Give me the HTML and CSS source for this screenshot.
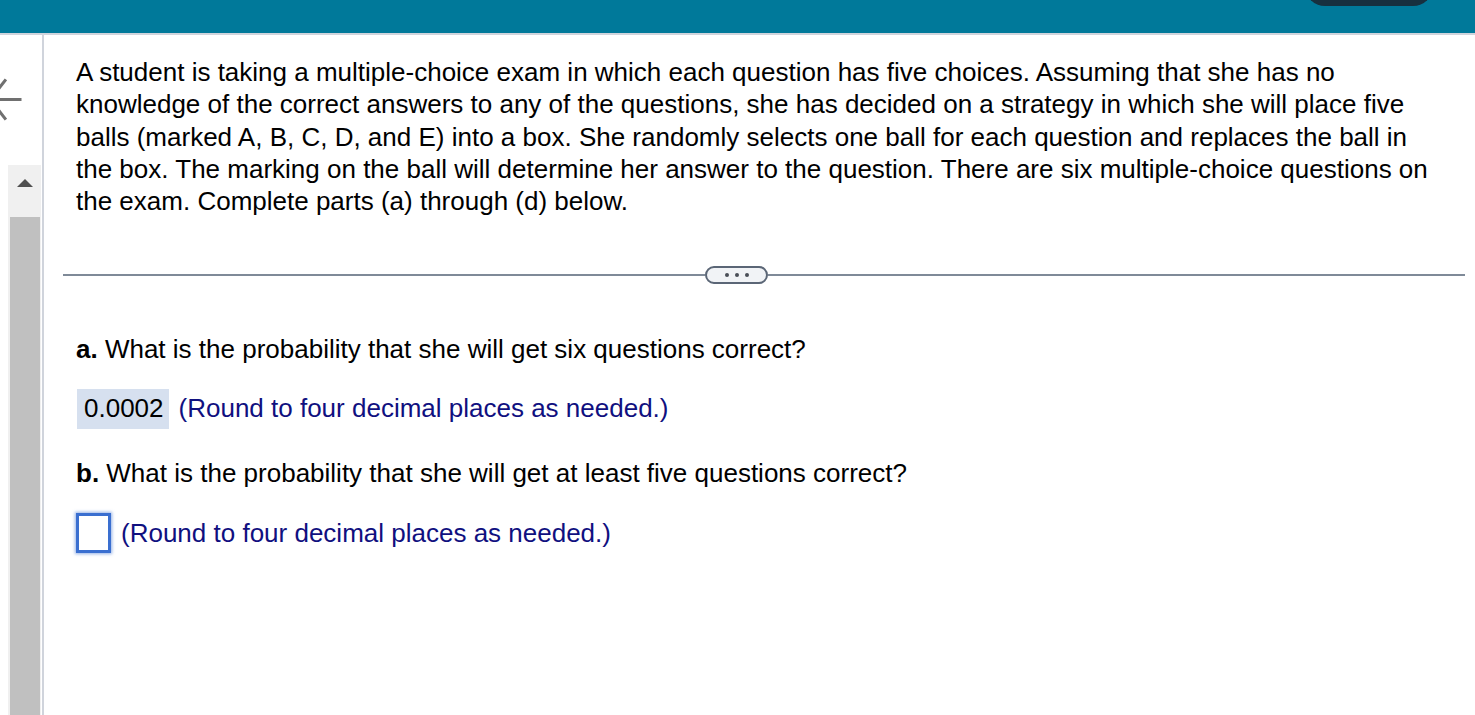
FILE: index.html
```html
<!DOCTYPE html>
<html lang="en">
<head>
<meta charset="utf-8">
<title>Exam question</title>
<link rel="stylesheet" href="styles.css">
</head>
<body>
<header class="topbar">
  <div class="top-pill"></div>
</header>
<div class="layout">
  <aside class="side">
    <svg class="back" width="42" height="60" viewBox="0 0 42 60" aria-hidden="true">
      <path d="M20 29.5 H-8 M5 10.5 L-9.5 29.5 L5 48.5" fill="none" stroke="#707070" stroke-width="3" stroke-linecap="square"/>
    </svg>
    <div class="track">
      <div class="arrow-up"></div>
      <div class="thumb"></div>
    </div>
  </aside>
  <main class="main">
    <p class="stem">A student is taking a multiple-choice exam in which each question has five choices. Assuming that she has no knowledge of the correct answers to any of the questions, she has decided on a strategy in which she will place five balls (marked A, B, C, D, and E) into a box. She randomly selects one ball for each question and replaces the ball in the box. The marking on the ball will determine her answer to the question. There are six multiple-choice questions on the exam. Complete parts (a) through (d) below.</p>
    <div class="sep">
      <div class="sep-line sep-left"></div>
      <div class="sep-pill"><span class="dot"></span><span class="dot"></span><span class="dot"></span></div>
      <div class="sep-line sep-right"></div>
    </div>
    <p class="q q-a"><b>a.</b> What is the probability that she will get six questions correct?</p>
    <div class="ans ans-a">
      <span class="filled">0.0002</span>
      <span class="hint">(Round to four decimal places as needed.)</span>
    </div>
    <p class="q q-b"><b>b.</b> What is the probability that she will get at least five questions correct?</p>
    <div class="ans ans-b">
      <span class="input"></span>
      <span class="hint">(Round to four decimal places as needed.)</span>
    </div>
  </main>
</div>
</body>
</html>
```

FILE: styles.css
```css
* { box-sizing: border-box; }
html, body { margin: 0; padding: 0; height: 100%; overflow: hidden; }
body {
  font-family: "Liberation Sans", Arial, sans-serif;
  color: #000;
  background: #fff;
  display: flex;
  flex-direction: column;
}
.topbar {
  height: 35px;
  background: #00799a;
  border-bottom: 2px solid #d0d4dc;
  display: flex;
  justify-content: flex-end;
  padding-right: 42px;
  flex: none;
}
.top-pill {
  width: 128px;
  height: 40px;
  margin-top: -34px;
  border-radius: 20px;
  background: #17303f;
}
.layout {
  flex: 1;
  display: flex;
  min-height: 0;
}
.side {
  width: 44px;
  flex: none;
  border-right: 2px solid #d0d4dc;
  display: flex;
  flex-direction: column;
  padding-top: 35px;
  overflow: hidden;
}
.back { display: block; flex: none; overflow: hidden; }
.track {
  margin-top: 35px;
  margin-left: 8px;
  width: 33px;
  flex: 1;
  background: #f0f0f0;
  display: flex;
  flex-direction: column;
  align-items: flex-start;
}
.arrow-up {
  margin-top: 14px;
  margin-left: 9px;
  width: 0;
  height: 0;
  border-left: 8px solid transparent;
  border-right: 8px solid transparent;
  border-bottom: 8px solid #505050;
}
.thumb {
  margin-top: 30px;
  margin-left: 2px;
  width: 30px;
  flex: 1;
  background: #c0c0c0;
}
.main {
  flex: 1;
  padding: 0 10px 0 19px;
  font-size: 26px;
  line-height: 32.25px;
}
.stem {
  margin: 21px 25px 0 13px;
}
.sep {
  margin-top: 49px;
  height: 18px;
  display: flex;
  align-items: center;
}
.sep-line { height: 2px; background: #7f8a98; }
.sep-left { width: 642px; flex: none; }
.sep-right { flex: 1; }
.sep-pill {
  width: 63px;
  height: 18px;
  border: 2px solid #5b6676;
  border-radius: 9px;
  background: #f1f3f6;
  display: flex;
  align-items: center;
  justify-content: center;
  gap: 6px;
}
.dot {
  width: 4px;
  height: 4px;
  border-radius: 50%;
  background: #4a4f57;
}
.q { margin: 0 0 0 13px; }
.q b { font-weight: bold; }
.q-a { margin-top: 49px; }
.q-b { margin-top: 28px; }
.ans {
  margin-left: 13px;
  display: flex;
  align-items: center;
  gap: 10px;
}
.ans-a { margin-top: 23px; }
.ans-b { margin-top: 24px; }
.filled {
  margin-left: 1px;
  height: 40px;
  padding: 0 5px 0 7px;
  background: #d6e0ef;
  display: flex;
  align-items: center;
}
.input {
  width: 35px;
  height: 40px;
  border: 3px solid #3a6fd0;
  background: #fff;
  box-shadow: 0 0 3px 1px rgba(58, 111, 208, 0.55);
}
.hint { color: #10107f; }
```
